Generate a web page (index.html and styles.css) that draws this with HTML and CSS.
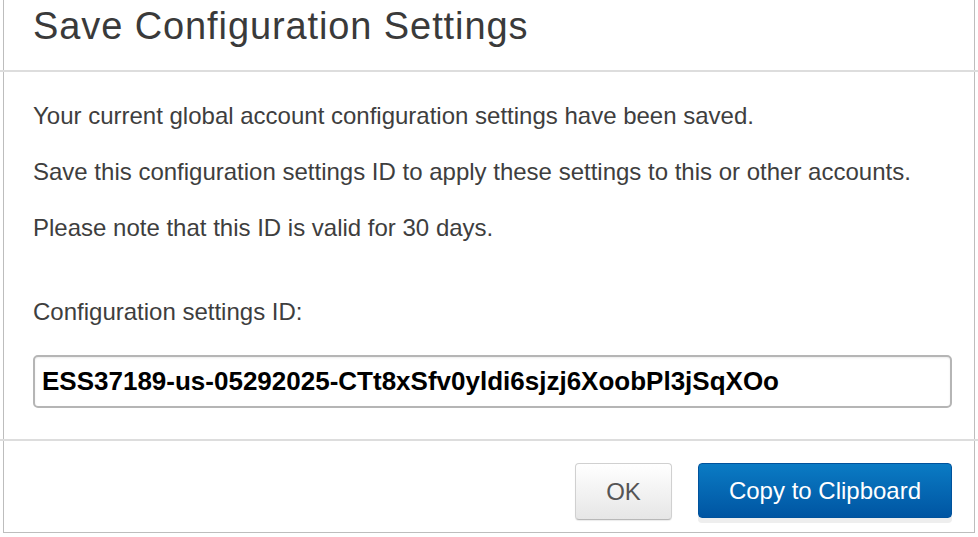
FILE: index.html
```html
<!DOCTYPE html>
<html lang="en">
<head>
<meta charset="utf-8">
<title>Save Configuration Settings</title>
<link rel="stylesheet" href="styles.css">
</head>
<body>
<div class="modal">
  <div class="modal-header">
    <h1 class="modal-title">Save Configuration Settings</h1>
  </div>
  <div class="divider"></div>
  <div class="modal-body">
    <p class="msg">Your current global account configuration settings have been saved.</p>
    <p class="msg">Save this configuration settings ID to apply these settings to this or other accounts.</p>
    <p class="msg">Please note that this ID is valid for 30 days.</p>
    <label class="field-label" for="cfg-id">Configuration settings ID:</label>
    <input class="field-input" id="cfg-id" type="text" readonly value="ESS37189-us-05292025-CTt8xSfv0yldi6sjzj6XoobPl3jSqXOo">
  </div>
  <div class="divider"></div>
  <div class="modal-footer">
    <button class="btn btn-default" type="button">OK</button>
    <button class="btn btn-primary" type="button">Copy to Clipboard</button>
  </div>
</div>
</body>
</html>
```
FILE: styles.css
```css
html, body {
  margin: 0;
  padding: 0;
  background: #ffffff;
}
body {
  width: 978px;
  height: 537px;
  overflow: hidden;
  font-family: "Liberation Sans", Arial, sans-serif;
  color: #3e3e3e;
}
.modal {
  margin-left: 3px;
  width: 970px;
  height: 532px;
  border-left: 1px solid #bdbdbd;
  border-right: 1px solid #bdbdbd;
  border-bottom: 1px solid #bdbdbd;
  display: flex;
  flex-direction: column;
}
.modal-header {
  height: 70px;
  box-sizing: border-box;
  padding: 3px 0 0 29px;
}
.modal-title {
  margin: 0;
  font-size: 38px;
  line-height: 46px;
  letter-spacing: 0.9px;
  font-weight: normal;
  color: #3a3a3a;
}
.divider {
  height: 2px;
  margin: 0 -4px;
  background: #dddddd;
  flex: none;
}
.modal-body {
  height: 367px;
  box-sizing: border-box;
  padding: 28px 22px 0 29px;
  display: flex;
  flex-direction: column;
}
.msg {
  margin: 0 0 24px;
  font-size: 24px;
  line-height: 32px;
}
.field-label {
  margin-top: 28px;
  font-size: 24px;
  line-height: 32px;
}
.field-input {
  margin-top: 27px;
  height: 53px;
  box-sizing: border-box;
  width: 919px;
  border: 2px solid #b5b5b5;
  border-radius: 5px;
  padding: 0 7px;
  font-family: "Liberation Sans", Arial, sans-serif;
  font-size: 26px;
  font-weight: bold;
  color: #000000;
  background: #ffffff;
  box-shadow: inset 0 1px 2px rgba(0, 0, 0, 0.08);
  outline: none;
}
.modal-footer {
  flex: 1;
  display: flex;
  justify-content: flex-end;
  align-items: flex-start;
  gap: 26px;
  padding: 22px 22px 0 0;
}
.btn {
  font-family: "Liberation Sans", Arial, sans-serif;
  font-size: 24px;
  border-radius: 4px;
  cursor: pointer;
  padding: 0;
}
.btn-default {
  width: 97px;
  height: 57px;
  color: #555555;
  border: 1px solid #d0d0d0;
  border-bottom-color: #b8b8b8;
  background: linear-gradient(#ffffff, #e6e6e6);
  box-shadow: 0 1px 1px rgba(0, 0, 0, 0.08);
}
.btn-primary {
  width: 254px;
  height: 55px;
  color: #ffffff;
  border: 1px solid #00529c;
  background: linear-gradient(#0a7bc4, #0055a2);
  box-shadow: 0 5px 0 #eeeeee;
}
```
